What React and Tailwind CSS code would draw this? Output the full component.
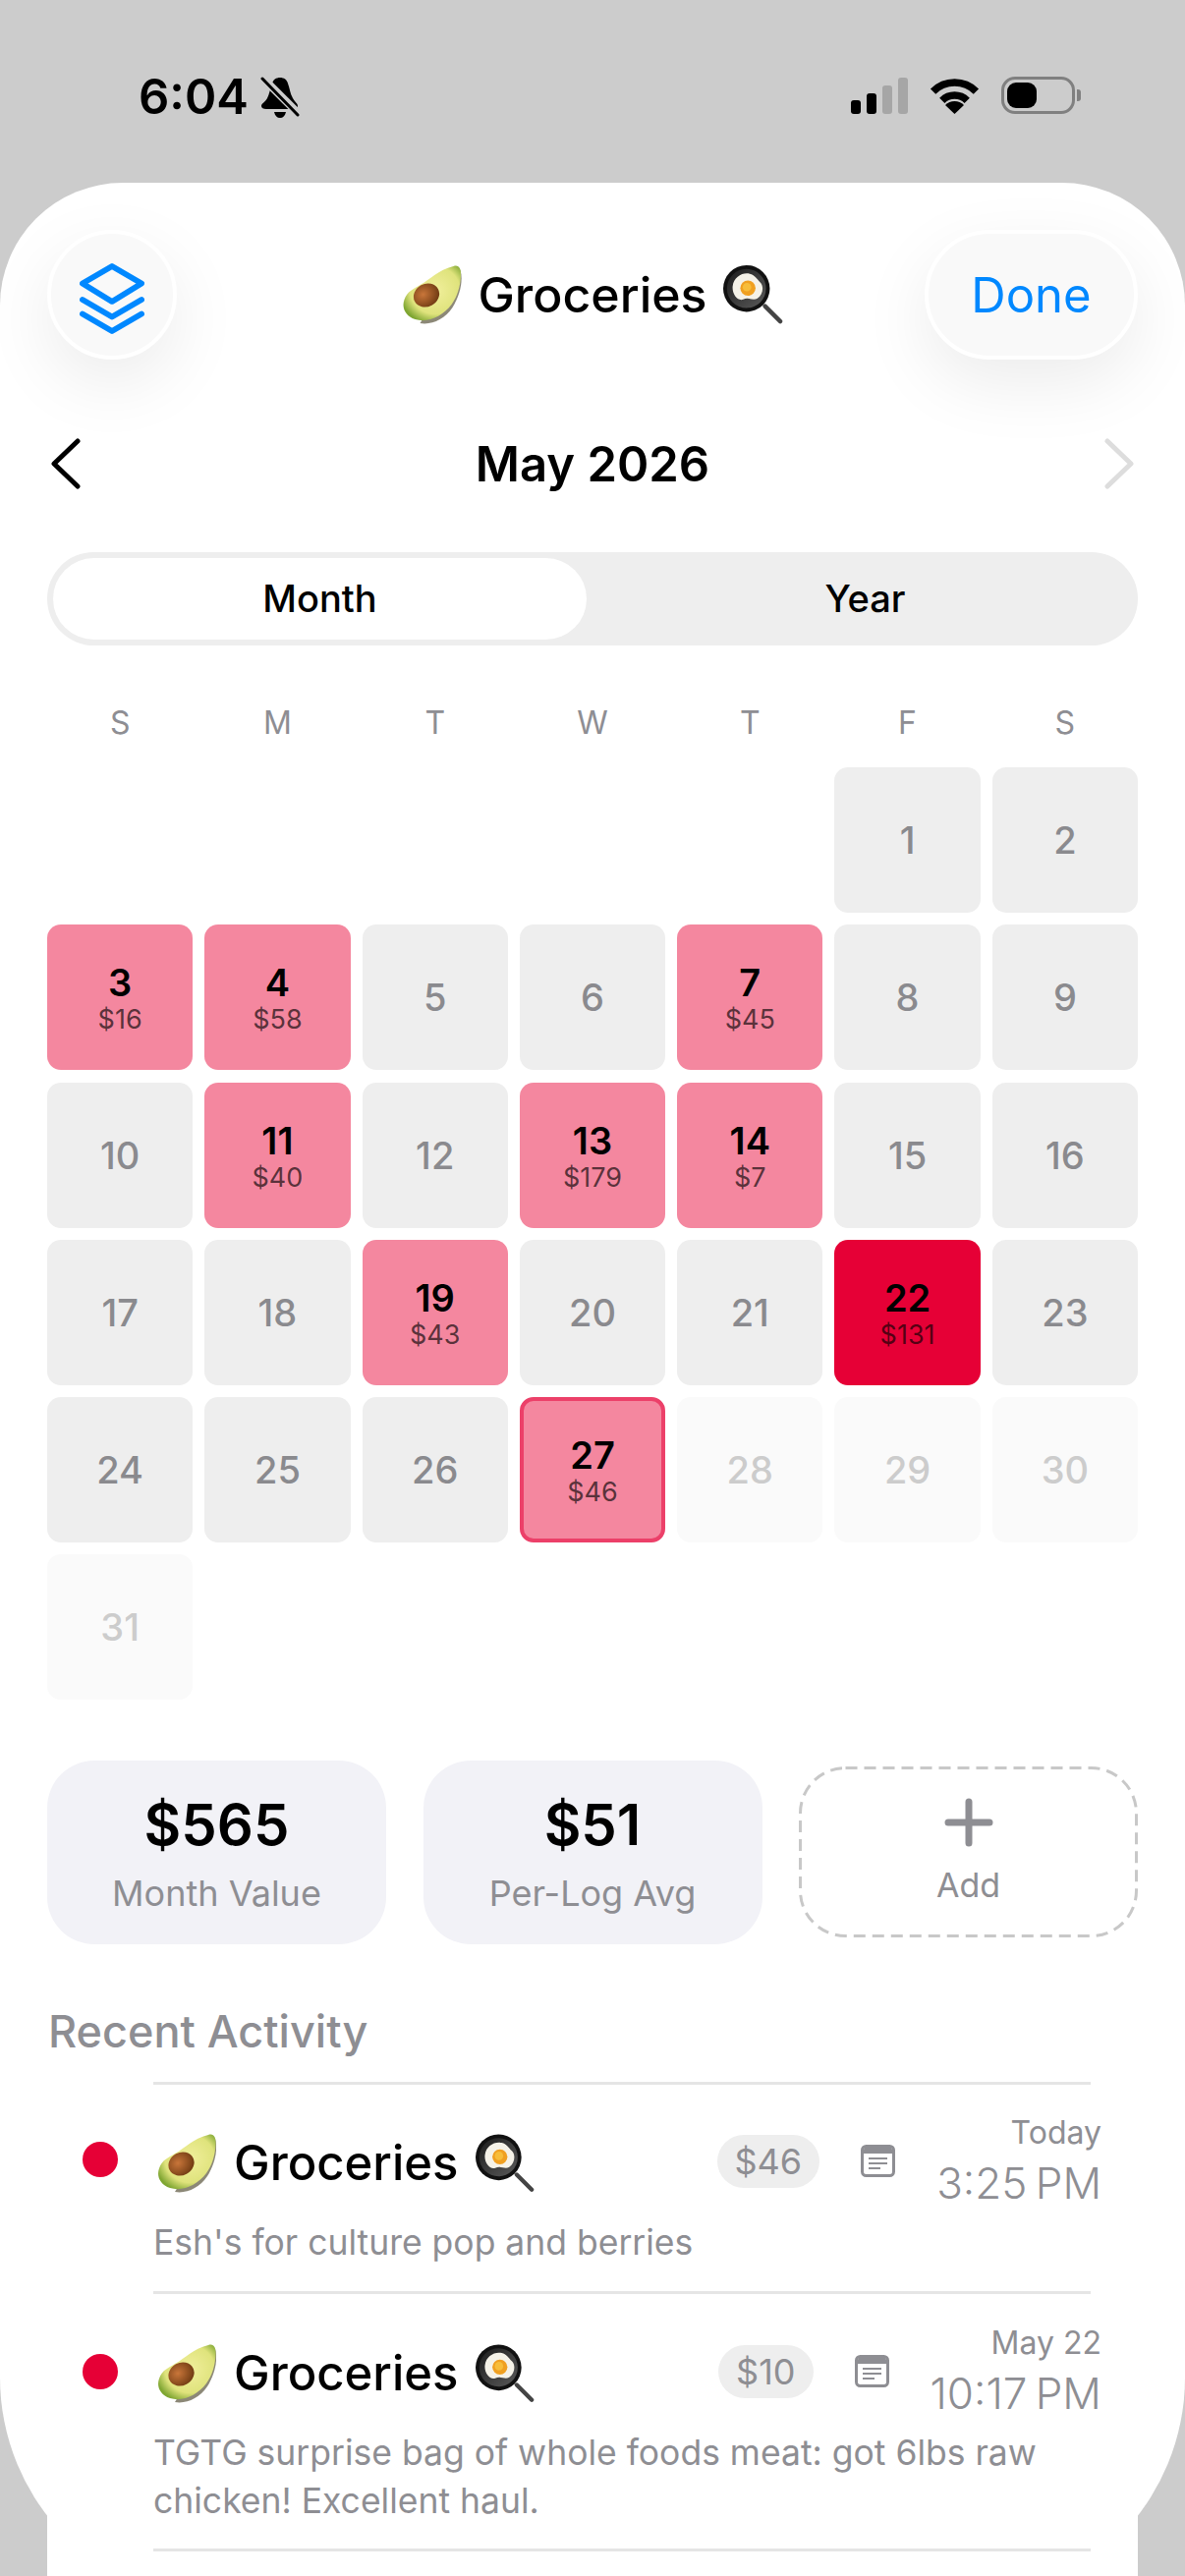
import React from "react";

const amounts = { 3: "$16", 4: "$58", 7: "$45", 11: "$40", 13: "$179", 14: "$7", 19: "$43", 22: "$131", 27: "$46" };
const days = Array.from({ length: 31 }, (_, i) => i + 1);
const weekdays = ["S", "M", "T", "W", "T", "F", "S"];

const Avocado = ({ className }) => (
  <svg viewBox="0 0 60 62" className={className}>
    <defs>
      <radialGradient id="avoFlesh" cx="0.55" cy="0.45" r="0.62">
        <stop offset="0" stopColor="#f1ef9c" />
        <stop offset="0.7" stopColor="#dfe37c" />
        <stop offset="1" stopColor="#7fa632" />
      </radialGradient>
      <radialGradient id="avoSeed" cx="0.4" cy="0.4" r="0.65">
        <stop offset="0" stopColor="#c9763a" />
        <stop offset="1" stopColor="#6f3a12" />
      </radialGradient>
    </defs>
    <path d="M59 6C62 16 59 31 51 44C43 56 30 62 18 60L40 24Z" fill="#6f6a55" opacity="0.8" />
    <path d="M52 2C58 0 60 5 59.5 12C59 22 56 33 50 41C41 53 26 60 13 56C3 53 -1 44 2 36C5 27 12 25 18 21C29 15 36 6 52 2Z" fill="url(#avoFlesh)" />
    <ellipse cx="24.5" cy="31.5" rx="13.5" ry="11.5" transform="rotate(-28 24.5 31.5)" fill="url(#avoSeed)" />
  </svg>
);

const Pan = ({ className }) => (
  <svg viewBox="0 0 63 62" className={className}>
    <defs>
      <linearGradient id="panBase" x1="0" y1="0" x2="1" y2="1">
        <stop offset="0" stopColor="#1c1c1c" />
        <stop offset="1" stopColor="#5a5a5a" />
      </linearGradient>
    </defs>
    <path d="M44 43L60 59" stroke="#444" strokeWidth="4.5" strokeLinecap="round" />
    <circle cx="24.5" cy="24.5" r="24.5" fill="#111" />
    <circle cx="24.5" cy="24.5" r="20.5" fill="url(#panBase)" />
    <path d="M10 22C11 12 21 7 28 9C33 10 35 14 39 18C43 22 42 31 36 35C31 38 27 33 21 36C15 38 9 30 10 22Z" fill="#f5f2e8" />
    <circle cx="26" cy="24" r="8" fill="#f0a021" />
    <circle cx="25" cy="23" r="4.5" fill="#f7bd3a" />
  </svg>
);

const Title = ({ emojiClass, textClass }) => (
  <div className="flex items-center">
    <Avocado className={emojiClass} />
    <span className={textClass}>Groceries</span>
    <Pan className={emojiClass} />
  </div>
);

const StatusBar = () => (
  <div className="h-[186px] flex justify-between items-start pt-[77px] pl-[141px] pr-[106px]">
    <div className="flex items-center gap-[12px] h-[43px]">
      <span className="text-[49px] leading-none font-semibold text-black">6:04</span>
      <svg viewBox="0 0 40 44" className="w-[40px] h-[44px]">
        <path d="M20 2C24 2 27 4 28 8C30 13 30 18 33 23C35 27 38 28 38 31C38 33 36 34 34 34H6C3 34 1 33 1 31C1 28 5 27 7 23C9 19 10 13 12 8C13 4 16 2 20 2Z" fill="#000" />
        <path d="M14 37H26C25 41 23 43 20 43C17 43 15 41 14 37Z" fill="#000" />
        <path d="M0 0L40 40" stroke="#cccccc" strokeWidth="8" />
        <path d="M2 3L38 40" stroke="#000" strokeWidth="3" strokeLinecap="round" />
      </svg>
    </div>
    <div className="flex items-end h-[39px] gap-[22px]">
      <div className="flex items-end gap-[6px] h-[38px]">
        <div className="w-[10px] h-[14px] rounded-[3px] bg-black" />
        <div className="w-[10px] h-[21px] rounded-[3px] bg-black" />
        <div className="w-[10px] h-[29px] rounded-[3px] bg-[#a6a6a6]" />
        <div className="w-[10px] h-[37px] rounded-[3px] bg-[#a6a6a6]" />
      </div>
      <svg viewBox="0 0 51 37" className="w-[51px] h-[37px]">
        <path d="M3.6 14.1A31 31 0 0 1 47.4 14.1" fill="none" stroke="#000" strokeWidth="7.5" />
        <path d="M12.8 23.3A18 18 0 0 1 38.2 23.3" fill="none" stroke="#000" strokeWidth="7.5" />
        <path d="M25.5 37L16 28A13.4 13.4 0 0 1 35 28Z" fill="#000" />
      </svg>
      <div className="flex items-center gap-[2px]">
        <div className="w-[75px] h-[38px] rounded-[14px] border-[3px] border-[#808080] p-[3px]">
          <div className="w-[30px] h-full rounded-[9px] bg-black" />
        </div>
        <div className="w-[4px] h-[12px] rounded-r-[3px] bg-[#808080]" />
      </div>
    </div>
  </div>
);

const Header = () => (
  <div className="grid grid-cols-[217px_1fr_217px] items-center h-[132px]">
    <div className="w-[132px] h-[132px] rounded-full bg-[#f9f9f9] border-[4px] border-white shadow-[0_24px_70px_rgba(0,0,0,0.08)] flex items-center justify-center">
      <svg viewBox="0 0 68 74" className="w-[66px] h-[72px] mt-[7px]" fill="none" stroke="#0088ff" strokeWidth="6" strokeLinecap="round" strokeLinejoin="round">
        <path d="M34 3L65 21L34 40L3 21Z" />
        <path d="M3 38L34 56L65 38" />
        <path d="M3 53L34 71L65 53" />
      </svg>
    </div>
    <div className="flex justify-center">
      <Title emojiClass="w-[61px] h-[62px]" textClass="mx-[16px] text-[50px] leading-none font-medium text-black" />
    </div>
    <div className="h-[132px] rounded-full bg-[#f9f9f9] border-[4px] border-white shadow-[0_24px_70px_rgba(0,0,0,0.08)] flex items-center justify-center text-[49px] leading-none text-[#0088ff]">
      Done
    </div>
  </div>
);

const MonthNav = () => (
  <div className="mt-[72px] h-[68px] flex items-center justify-between px-[4px]">
    <svg viewBox="0 0 30 52" className="w-[30px] h-[52px]" fill="none" stroke="#000" strokeWidth="5" strokeLinecap="round" strokeLinejoin="round">
      <path d="M27 3L3 26L27 49" />
    </svg>
    <span className="text-[49px] leading-none font-semibold text-black">May 2026</span>
    <svg viewBox="0 0 30 52" className="w-[30px] h-[52px]" fill="none" stroke="#dddddd" strokeWidth="5" strokeLinecap="round" strokeLinejoin="round">
      <path d="M3 3L27 26L3 49" />
    </svg>
  </div>
);

const Segment = () => (
  <div className="mt-[56px] h-[95px] rounded-full bg-[#eeeeee] p-[6px] flex items-stretch">
    <div className="w-[543px] rounded-full bg-white flex items-center justify-center text-[38px] font-medium text-black">Month</div>
    <div className="flex-1 pl-[12px] flex items-center justify-center text-[38px] font-medium text-black">Year</div>
  </div>
);

const DayCell = ({ day }) => {
  const amount = amounts[day];
  const base = "h-[148px] rounded-[14px] flex flex-col items-center justify-center";
  if (amount) {
    const tone = day === 22 ? "bg-[#e60036]" : "bg-[#f4879f]";
    const ring = day === 27 ? "border-[4px] border-[#ec4069]" : "";
    return (
      <div className={`${base} ${tone} ${ring}`}>
        <span className="text-[38px] leading-[46px] font-semibold text-black">{day}</span>
        <span className="text-[27px] leading-[30px] text-black/65">{amount}</span>
      </div>
    );
  }
  const future = day > 27;
  return (
    <div className={`${base} ${future ? "bg-[#fafafa] text-[#cccccc]" : "bg-[#eeeeee] text-[#8a8a8e]"} ${day === 1 ? "col-start-6" : ""}`}>
      <span className="text-[38px] leading-none font-[550]">{day}</span>
    </div>
  );
};

const Calendar = () => (
  <>
    <div className="mt-[55px] h-[40px] grid grid-cols-7 gap-x-[12px]">
      {weekdays.map((d, i) => (
        <div key={i} className="flex items-center justify-center text-[32px] text-[#8e8e93]">{d}</div>
      ))}
    </div>
    <div className="mt-[29px] grid grid-cols-7 gap-x-[12px] gap-y-[12.3px]">
      {days.map((d) => <DayCell key={d} day={d} />)}
    </div>
  </>
);

const Stat = ({ value, label }) => (
  <div className="h-[187px] rounded-[48px] bg-[#f2f2f7] flex flex-col items-center justify-center">
    <span className="text-[58px] leading-[72px] font-semibold text-black">{value}</span>
    <span className="mt-[12px] text-[36px] leading-[44px] text-[#8e8e93]">{label}</span>
  </div>
);

const AddCard = () => (
  <div className="relative h-[174px] flex flex-col items-center justify-center">
    <svg viewBox="0 0 345 174" className="absolute inset-0 w-full h-full" fill="none">
      <rect x="1.5" y="1.5" width="342" height="171" rx="46" stroke="#c8c8c8" strokeWidth="3" strokeDasharray="12 7" />
    </svg>
    <svg viewBox="0 0 50 50" className="w-[50px] h-[50px]" fill="none" stroke="#8e8e93" strokeWidth="7" strokeLinecap="round">
      <path d="M25 4V46M4 25H46" />
    </svg>
    <span className="mt-[17px] text-[34px] leading-[44px] text-[#8e8e93]">Add</span>
  </div>
);

const Stats = () => (
  <div className="mt-[61.5px] grid grid-cols-3 gap-x-[37.5px] items-center">
    <Stat value="$565" label="Month Value" />
    <Stat value="$51" label="Per-Log Avg" />
    <AddCard />
  </div>
);

const NoteIcon = () => (
  <svg viewBox="0 0 35 33" className="w-[35px] h-[33px]">
    <rect x="1.5" y="1.5" width="32" height="30" rx="4" fill="none" stroke="#8e8e93" strokeWidth="3" />
    <path d="M3 5.5A3 3 0 0 1 6 2.5H29A3 3 0 0 1 32 5.5V9H3Z" fill="#8e8e93" />
    <path d="M8 14H27M8 19H27M8 24H20" stroke="#8e8e93" strokeWidth="2.2" />
  </svg>
);

const LogRow = ({ amount, date, time, note, tall }) => (
  <div className="flex pl-[36px]">
    <div className={`w-[36px] h-[36px] rounded-full bg-[#e60036] shrink-0 ${tall ? "mt-[64px]" : "mt-[61px]"}`} />
    <div className="ml-[36px] mr-[48px] flex-1 min-w-0 border-t-[3px] border-[#e5e5e5]">
      <div className={`${tall ? "pt-[23px]" : "pt-[22px]"} h-[134px] flex items-center justify-between`}>
        <div className="pl-[4px] pt-[4px]">
          <Title emojiClass="w-[60px] h-[62px]" textClass="mx-[18px] text-[49px] leading-none font-medium text-black" />
        </div>
        <div className="flex items-center gap-[42px] mr-[-11px]">
          <div className="h-[54px] px-[18px] rounded-full bg-[#eeeeee] flex items-center text-[36px] text-[#8e8e93]">{amount}</div>
          <NoteIcon />
          <div className="flex flex-col items-end">
            <span className="text-[32px] leading-[44px] text-[#8e8e93]">{date}</span>
            <span className="text-[44px] leading-[58px] font-light text-[#8e8e93] [word-spacing:-4px]">{time}</span>
          </div>
        </div>
      </div>
      <p className={`${tall ? "mt-[4px] pb-[24px]" : "mt-[3px] pb-[25px]"} text-[35.5px] leading-[48.5px] text-[#8e8e93]`}>{note}</p>
    </div>
  </div>
);

const Activity = () => (
  <div className="mt-[21px] h-[700px] bg-white">
    <div className="pt-[38px] h-[119px]">
      <h2 className="ml-[1px] text-[45px] leading-[60px] font-medium text-[#8e8e93]">Recent Activity</h2>
    </div>
    <LogRow amount="$46" date="Today" time="3:25 PM" note="Esh's for culture pop and berries" />
    <LogRow amount="$10" date="May 22" time="10:17 PM" note="TGTG surprise bag of whole foods meat: got 6lbs raw chicken! Excellent haul." tall />
    <div className="ml-[108px] mr-[48px] border-t-[3px] border-[#e5e5e5]" />
  </div>
);

export default function App() {
  return (
    <div className="w-[1206px] h-[2622px] overflow-hidden bg-[#cccccc] font-[family-name:Inter,sans-serif]">
      <StatusBar />
      <div className="h-[2464px] bg-white rounded-t-[125px] rounded-b-[230px] px-[48px] pt-[48px]">
        <Header />
        <MonthNav />
        <Segment />
        <Calendar />
        <Stats />
        <Activity />
      </div>
    </div>
  );
}
